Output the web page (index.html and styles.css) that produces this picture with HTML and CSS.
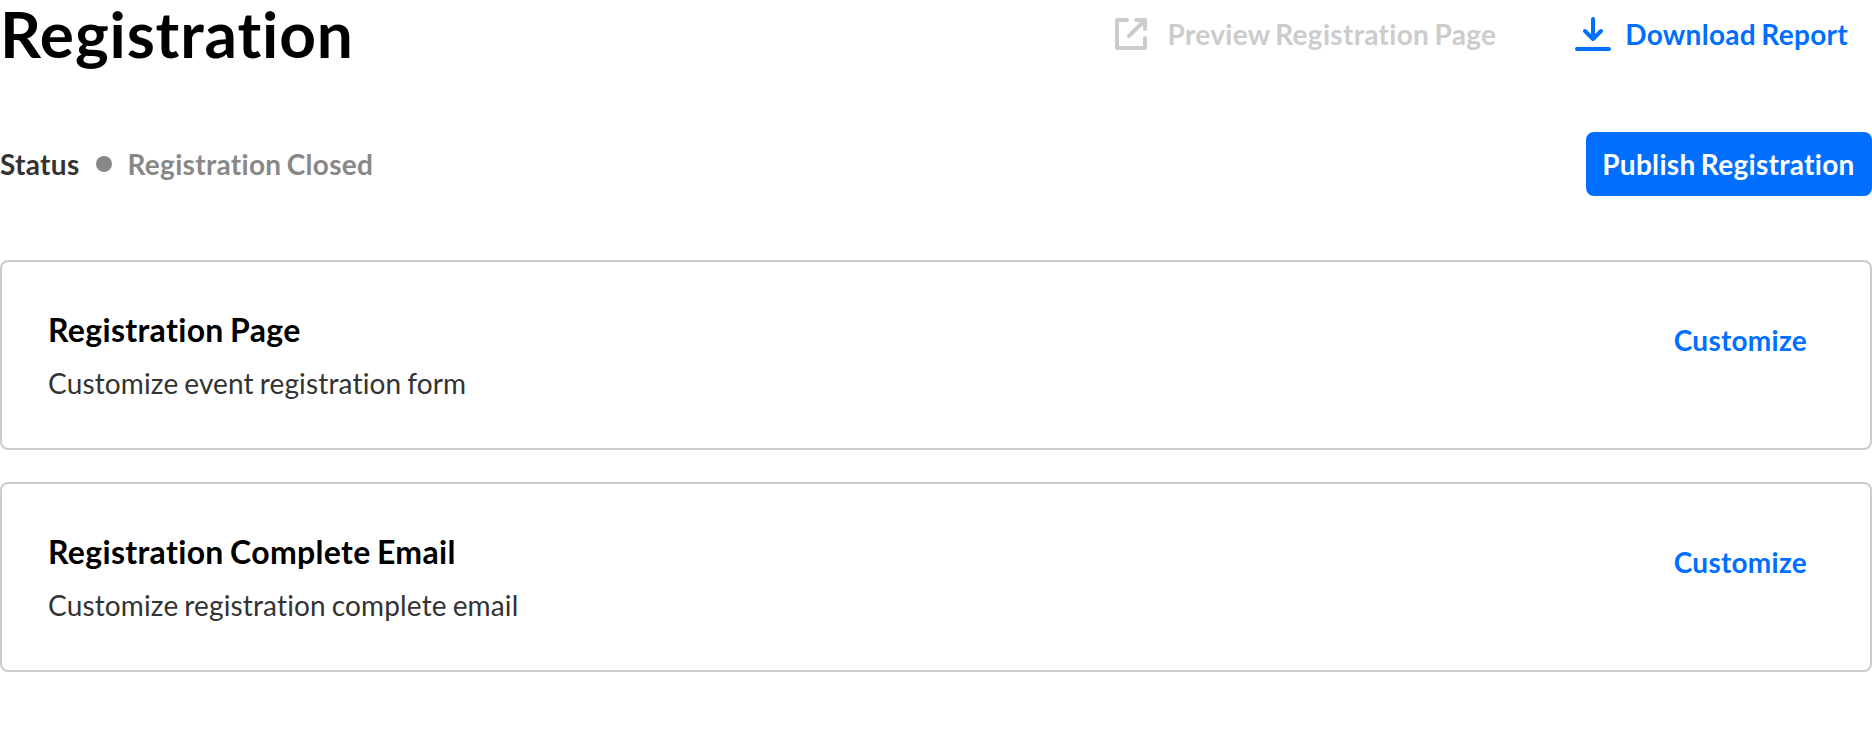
FILE: index.html
```html
<!DOCTYPE html>
<html lang="en">
<head>
<meta charset="utf-8">
<title>Registration</title>
<link rel="stylesheet" href="styles.css">
</head>
<body>
<header class="header">
  <h1 class="title">Registration</h1>
  <nav class="actions">
    <a class="action action-disabled">
      <svg class="icon-open" viewBox="0 0 32 32" fill="none" stroke="currentColor" stroke-width="4" stroke-linecap="round" stroke-linejoin="round"><path d="M12 2H2V30H30V20M21 2H30V11M30 2L14 18"/></svg>
      <span>Preview Registration Page</span>
    </a>
    <a class="action action-link">
      <svg class="icon-download" viewBox="0 0 36 34" fill="none" stroke="currentColor" stroke-width="4" stroke-linecap="round" stroke-linejoin="round"><path d="M18 2V22M10 14L18 22L26 14M2 32H34"/></svg>
      <span>Download Report</span>
    </a>
  </nav>
</header>
<section class="status-row">
  <div class="status"><span>Status</span><i class="dot"></i><span class="status-value">Registration Closed</span></div>
  <button class="publish">Publish Registration</button>
</section>
<main class="cards">
  <article class="card">
    <div><h2 class="card-title">Registration Page</h2><p class="card-text">Customize event registration form</p></div>
    <a class="customize">Customize</a>
  </article>
  <article class="card">
    <div><h2 class="card-title">Registration Complete Email</h2><p class="card-text">Customize registration complete email</p></div>
    <a class="customize">Customize</a>
  </article>
</main>
</body>
</html>
```
FILE: styles.css
```css
* { box-sizing: border-box; }
body { margin: 0; font-family: Lato, sans-serif; font-size: 28px; font-variant-ligatures: none; background: #fff; color: #333; }
h1, h2, p { margin: 0; }
.header { display: flex; justify-content: space-between; height: 132px; }
.title { font-size: 64px; line-height: 68px; font-weight: 700; color: #000; letter-spacing: 0.85px; }
.actions { display: flex; height: 68px; align-items: center; gap: 79px; padding-right: 24px; }
.action { display: flex; align-items: center; font-weight: 700; line-height: 40px; letter-spacing: 0.3px; word-spacing: -1.8px; }
.action-disabled { color: #ccc; gap: 21px; }
.action-link { color: #006fff; gap: 14px; }
.icon-open { width: 32px; height: 32px; }
.icon-download { width: 36px; height: 34px; }
.status-row { display: flex; justify-content: space-between; align-items: center; height: 64px; }
.status { display: flex; align-items: center; font-weight: 700; letter-spacing: 0.3px; word-spacing: -1.8px; }
.dot { width: 16px; height: 16px; border-radius: 50%; background: #888; margin: 0 16px; }
.status-value { color: #888; }
.publish { width: 286px; height: 64px; padding: 0 1px 0 0; border: 0; border-radius: 8px; background: #006fff; color: #fff; font: 700 28px/40px Lato, sans-serif; font-variant-ligatures: none; letter-spacing: 0.3px; word-spacing: -1.8px; }
.cards { display: flex; flex-direction: column; gap: 32px; margin-top: 64px; }
.card { display: flex; justify-content: space-between; height: 190px; padding: 44px 63px 0 46px; border: 2px solid #ccc; border-radius: 8px; }
.card-title { font-size: 32px; line-height: 48px; font-weight: 700; color: #000; letter-spacing: 0.33px; word-spacing: -1.8px; }
.card-text { font-size: 28px; line-height: 40px; margin-top: 9px; letter-spacing: 0.15px; word-spacing: -1.4px; }
.customize { font-weight: 700; color: #006fff; line-height: 40px; margin-top: 14px; letter-spacing: 0.25px; }
```
